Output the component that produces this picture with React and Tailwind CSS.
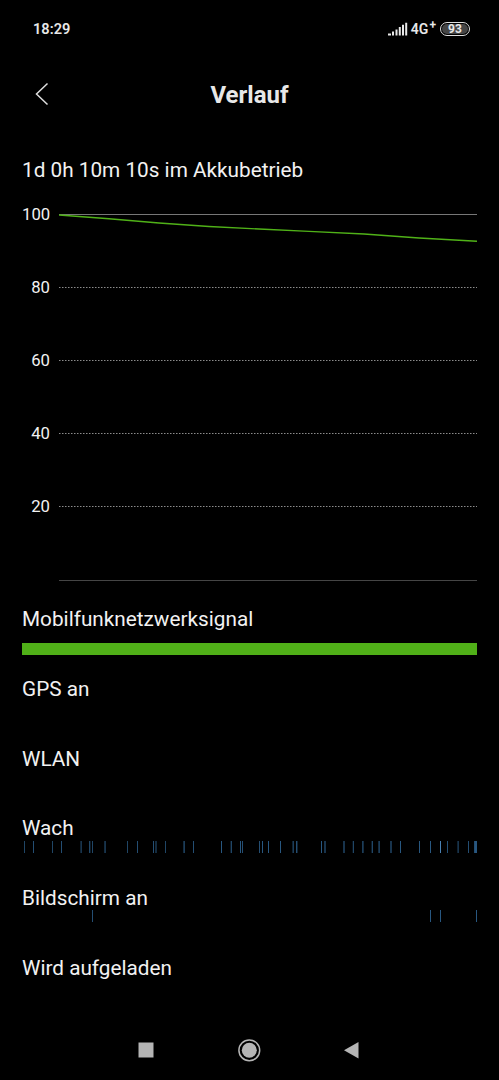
const WAKE = [
  [24, 0.8], [33, 0.9], [52, 0.8], [61, 0.9], [80, 0.4], [81, 0.6], [89, 0.8], [90, 0.3], [92, 0.8],
  [104, 0.5], [105, 0.6], [127, 0.8], [137, 0.9], [153, 0.9], [155, 0.5], [156, 0.5], [165, 0.8],
  [183, 0.5], [184, 0.7], [193, 0.9], [221, 1], [230, 0.3], [231, 0.8], [240, 1], [242, 0.9],
  [259, 0.9], [262, 1], [268, 1], [280, 1], [292, 0.4], [293, 0.7], [296, 0.9], [297, 0.4],
  [321, 1], [324, 0.6], [325, 0.6], [343, 0.6], [344, 0.6], [352, 0.2], [353, 0.8], [362, 0.7],
  [363, 0.5], [371, 0.3], [372, 0.8], [378, 0.5], [379, 0.7], [390, 0.6], [391, 0.6], [400, 1],
  [419, 1], [430, 1], [440, 2], [447, 0.9], [457, 0.4], [458, 0.6], [468, 0.9],
  [474, 0.9], [475, 1.3], [476, 1.3],
];
const SCREEN = [[92, 0.9], [430, 1], [440, 1], [476, 1]];

function Ticks({ data }) {
  return (
    <svg width="455" height="12" viewBox="22 0 455 12" shapeRendering="crispEdges" className="-mt-[12px] block">
      {data.map(([x, a]) => (
        <rect key={x} x={x} y="0" width="1" height="12" fill={a > 1.5 ? "#4a82b4" : "#285780"} opacity={Math.min(a, 1)} />
      ))}
    </svg>
  );
}

function Row({ label, children }) {
  return (
    <section className="h-[69.8px]">
      <h2 className="h-[36px] text-[20.75px] leading-[24px]">{label}</h2>
      {children}
    </section>
  );
}

function Chart() {
  return (
    <div className="flex">
      <div className="flex w-[28px] flex-col text-right text-[16.7px] leading-[20px]">
        {[100, 80, 60, 40, 20].map((n) => (
          <span key={n} className="h-[73px]">{n}</span>
        ))}
      </div>
      <svg width="418" height="368" viewBox="0 0 418 368" className="mt-[8px] ml-[9px] block">
        <rect x="0" y="1" width="418" height="1" fill="#777" />
        {[74, 147, 220, 293].map((y) => (
          <path key={y} d={`M0 ${y + 0.5}H418`} stroke="#8c8c8c" strokeDasharray="1.5 1.5" />
        ))}
        <rect x="0" y="367" width="418" height="1" fill="#454545" />
        <path d="M0 2 50 5.7 100 10 150 13.5 200 16 250 18.4 305 21 360 25 418 28.2" fill="none" stroke="#50b218" strokeWidth="1.4" />
      </svg>
    </div>
  );
}

export default function App() {
  return (
    <div className="flex h-[1080px] w-[499px] flex-col overflow-hidden bg-black font-[Roboto,sans-serif] text-[#f2f2f2]">
      <header className="flex h-[60px] shrink-0 items-center justify-between pr-[29px] pb-[2px] pl-[33px] text-[#e8e8e8]">
        <time className="pt-px text-[14.6px] font-semibold">18:29</time>
        <div className="flex items-center">
          <svg width="20" height="14" viewBox="0 0 20 14" fill="#e8e8e8" className="mr-[3px]">
            <path d="M0 11.5h3v2H0zM4 9.6h2v3.9H4zM7.5 7.4h2v6.1h-2zM10.8 5h2v8.5h-2zM14 2.8h2v10.7h-2zM17.2.8h2v12.7h-2z" />
          </svg>
          <span className="flex text-[14px] leading-[18px] font-semibold">4G<sup className="top-0 ml-px text-[12px] leading-[11px]">+</sup></span>
          <span className="ml-[4px] flex h-[14px] w-[30px] items-center justify-center rounded-full border-[1.5px] border-[#dedede] p-px">
            <b className="flex h-full w-full items-center justify-center rounded-full bg-[#454545] text-[12px] leading-none font-bold">93</b>
          </span>
        </div>
      </header>
      <nav className="grid h-[70px] shrink-0 grid-cols-[60px_1fr_60px] items-center">
        <svg width="14" height="24" viewBox="0 0 14 24" fill="none" stroke="#dedede" strokeWidth="1.5" className="mb-[2px] ml-[35px]">
          <path d="M12.5 1.5 1.5 12l11 10.5" />
        </svg>
        <h1 className="text-center text-[24px] font-bold text-[#e8e8e8]">Verlauf</h1>
      </nav>
      <main className="min-h-0 flex-1 px-[22px] pt-[28px]">
        <h2 className="mb-[23px] text-[20.75px] leading-[24px]">1d 0h 10m 10s im Akkubetrieb</h2>
        <Chart />
        <div className="mt-[26px]">
          <Row label="Mobilfunknetzwerksignal"><div className="h-[12px] bg-[#50b018]" /></Row>
          <Row label="GPS an" />
          <Row label="WLAN" />
          <Row label="Wach"><div className="pt-px"><Ticks data={WAKE} /></div></Row>
          <Row label="Bildschirm an"><Ticks data={SCREEN} /></Row>
          <Row label="Wird aufgeladen" />
        </div>
      </main>
      <footer className="flex h-[60px] shrink-0 items-center justify-center">
        <svg width="223" height="24" viewBox="0 0 223 24" fill="#b5b5b5">
          <path d="M.5 4.5h15v15H.5z" />
          <circle cx="111.3" cy="12.3" r="7.5" />
          <circle cx="111.3" cy="12.3" r="10.4" fill="none" stroke="#b5b5b5" strokeWidth="1.5" />
          <path d="M220.5 4v16.5L206 12.2z" />
        </svg>
      </footer>
    </div>
  );
}
